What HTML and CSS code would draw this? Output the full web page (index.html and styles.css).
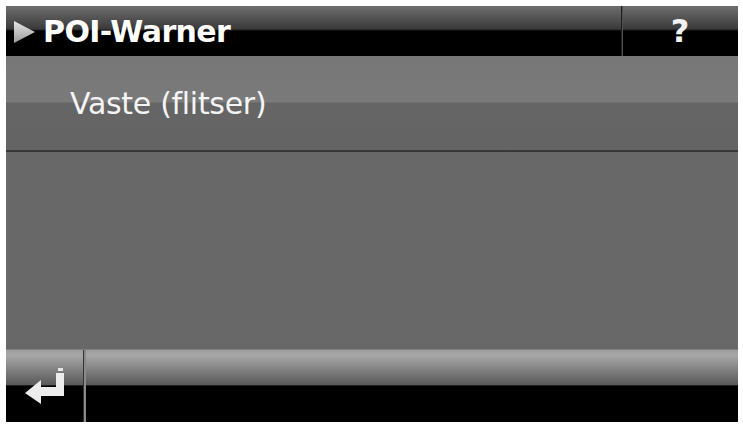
FILE: index.html
```html
<!DOCTYPE html>
<html lang="de">
<head>
    <meta charset="UTF-8">
    <meta name="viewport" content="width=device-width, initial-scale=1.0">
    <title>POI-Warner</title>
    <link rel="stylesheet" href="styles.css">
</head>
<body>
    <div class="screen">
        <div class="titlebar">
            <div class="title">
                <svg class="title-arrow" width="21" height="22" viewBox="0 0 21 22">
                    <defs>
                        <linearGradient id="arrowFill" x1="0" y1="0" x2="0" y2="1">
                            <stop offset="0" stop-color="#e6e6e6"/>
                            <stop offset="1" stop-color="#9a9a9a"/>
                        </linearGradient>
                    </defs>
                    <polygon points="0,0 21,11 0,22" fill="url(#arrowFill)"/>
                </svg>
                <span>POI-Warner</span>
            </div>
            <div class="help">?</div>
        </div>

        <div class="list">
            <div class="list-item">Vaste (flitser)</div>
        </div>

        <div class="toolbar">
            <div class="back">
                <!-- return arrow -->
                <svg width="40" height="40" viewBox="0 0 40 40">
                    <rect x="33" y="2" width="5" height="3" fill="#e8e8e8"/>
                    <path d="M31 7 H39 V30 H16 V38 L0 27 L16 14 V21 H31 Z" fill="#ececec"/>
                </svg>
            </div>
            <div class="toolbar-rest"></div>
        </div>
    </div>
</body>
</html>
```

FILE: styles.css
```css
body {
    margin: 0;
    padding: 0;
    background-color: #ffffff;
    font-family: "DejaVu Sans", Verdana, sans-serif;
}
.screen {
    margin: 6px;
    width: 732px;
    height: 416px;
    display: flex;
    flex-direction: column;
    background-color: #686868;
    overflow: hidden;
}

/* title bar */
.titlebar {
    height: 50px;
    display: flex;
    background: linear-gradient(#6e6e6e, #3a3a3a 46%, #000 50%, #000);
}
.title {
    flex: 1;
    display: flex;
    align-items: center;
    gap: 8px;
    padding-left: 8px;
    color: #fff;
    font-weight: bold;
    font-size: 30px;
    letter-spacing: -0.6px;
}
.title-arrow {
    margin-top: 2px;
}
.help {
    width: 116px;
    border-left: 1px solid #1e1e1e;
    box-shadow: inset 1px 0 #505050;
    display: flex;
    align-items: center;
    justify-content: center;
    color: #f2f2f2;
    font-weight: bold;
    font-size: 32px;
}

/* list */
.list {
    flex: 1;
}
.list-item {
    height: 94px;
    display: flex;
    align-items: center;
    padding-left: 64px;
    color: #f4f4f4;
    font-size: 30px;
    letter-spacing: -0.3px;
    background: linear-gradient(#777 0%, #7a7a7a 49%, #656565 50%, #646464);
    border-bottom: 2px solid #383838;
}

/* bottom toolbar */
.toolbar {
    height: 72px;
    display: flex;
    background: linear-gradient(#9e9e9e, #a6a6a6 8%, #5a5a5a 48%, #000 50%, #000);
    border-top: 1px solid #7e7e7e;
}
.back {
    width: 80px;
    display: flex;
    align-items: flex-end;
    justify-content: center;
    padding-bottom: 16px;
    box-sizing: border-box;
    border-right: 2px solid #8a8a8a;
    box-shadow: inset -1px 0 #333;
}
.toolbar-rest {
    flex: 1;
}
```
